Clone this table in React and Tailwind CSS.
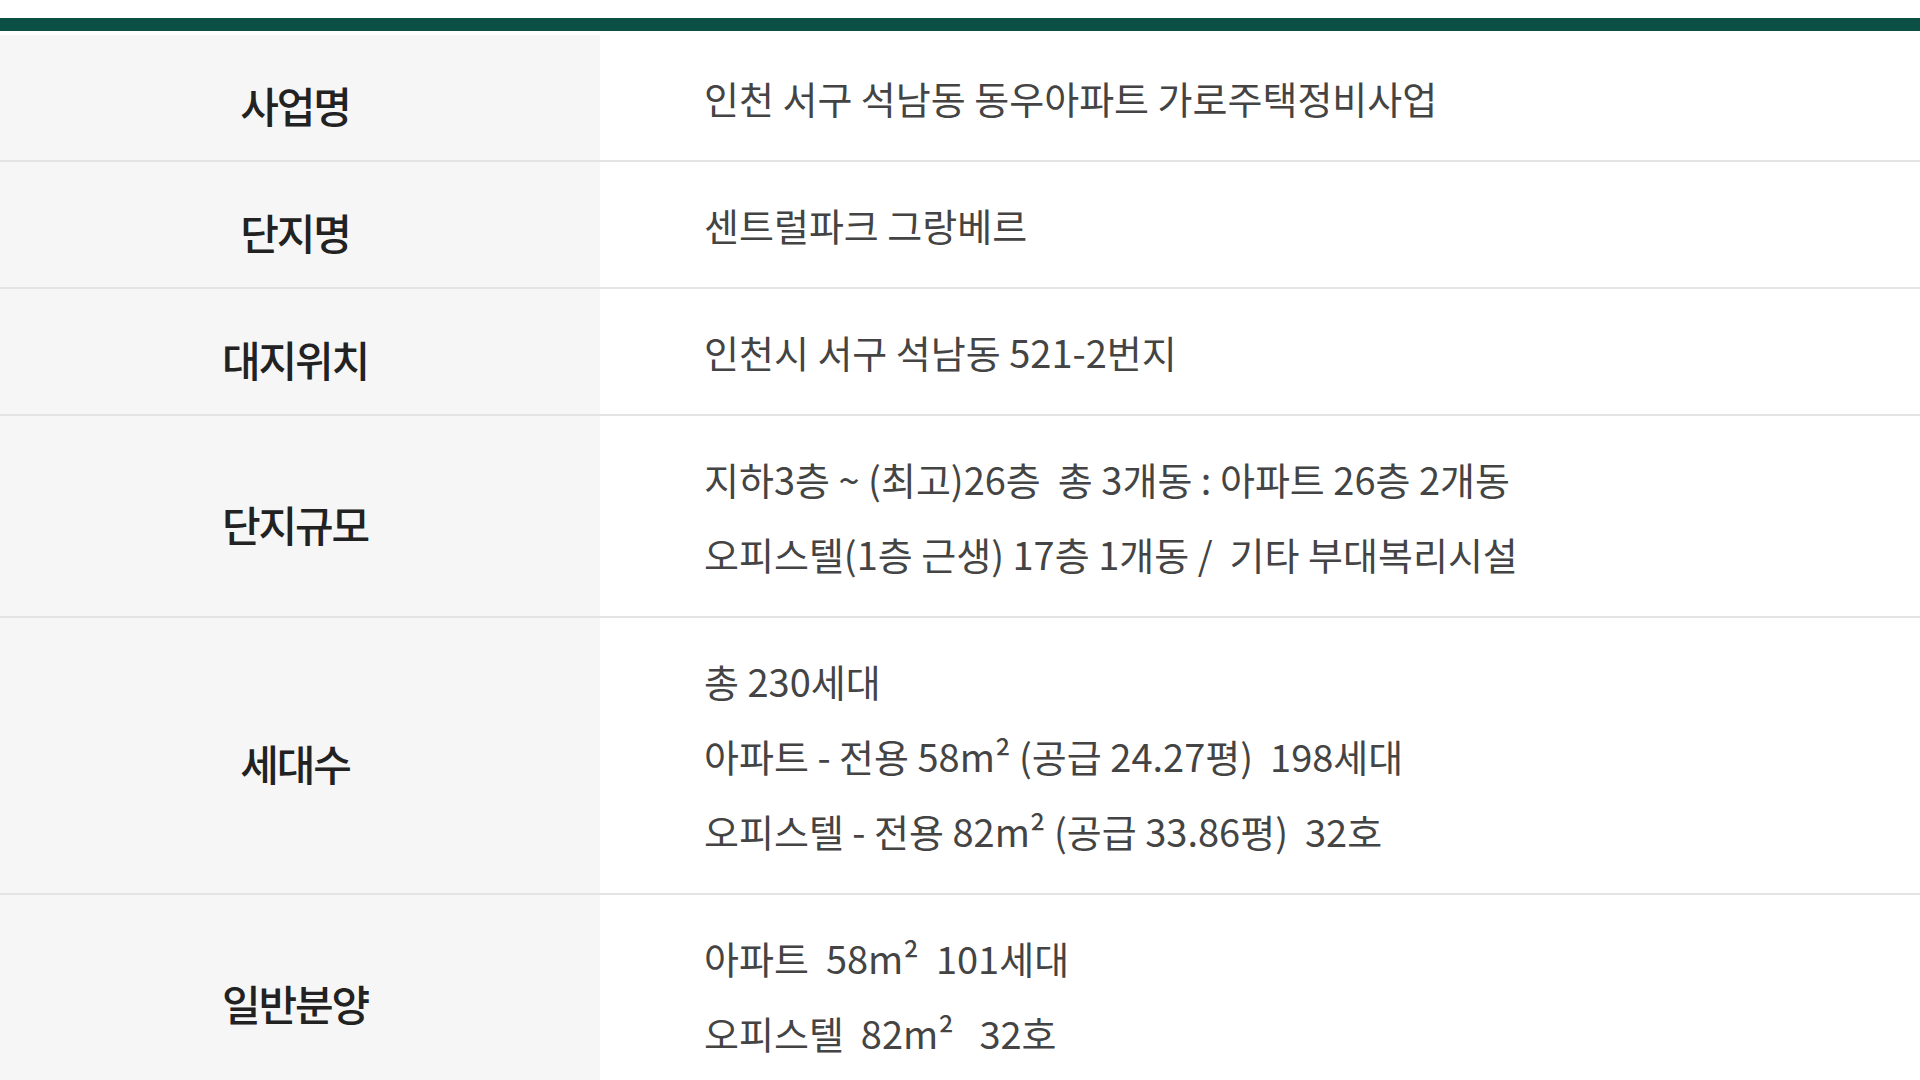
import React from "react";

const rows = [
  { label: "사업명", lines: ["인천 서구 석남동 동우아파트 가로주택정비사업"] },
  { label: "단지명", lines: ["센트럴파크 그랑베르"] },
  { label: "대지위치", lines: ["인천시 서구 석남동 521-2번지"] },
  {
    label: "단지규모",
    lines: [
      "지하3층 ~ (최고)26층  총 3개동 : 아파트 26층 2개동",
      "오피스텔(1층 근생) 17층 1개동 /  기타 부대복리시설",
    ],
  },
  {
    label: "세대수",
    lines: [
      "총 230세대",
      "아파트 - 전용 58m² (공급 24.27평)  198세대",
      "오피스텔 - 전용 82m² (공급 33.86평)  32호",
    ],
  },
  {
    label: "일반분양",
    lines: ["아파트  58m²  101세대", "오피스텔  82m²   32호"],
  },
];

const InfoRow = ({ label, lines }) => {
  return (
    <div className="flex border-b-2 border-[#e4e4e6]">
      <div className="w-[600px] shrink-0 bg-[#f6f6f6] flex items-center justify-center pt-[14px] pr-[10px]">
        <span className="text-[42px] font-medium tracking-[-0.05em] text-[#222222]">
          {label}
        </span>
      </div>
      <div className="flex-1 flex flex-col justify-center pl-[104px] py-[25px] bg-white">
        {lines.map((line, i) => (
          <p
            key={i}
            className="whitespace-pre leading-[75px] text-[38px] tracking-normal text-[#444444]"
          >
            {line}
          </p>
        ))}
      </div>
    </div>
  );
};

const App = () => {
  return (
    <div className="min-h-screen bg-white font-['Noto_Sans_CJK_KR',sans-serif]">
      <div className="pt-[18px]">
        <div className="h-[13px] bg-[#0c4f44] mb-[4px]"></div>
        {rows.map((row) => (
          <InfoRow key={row.label} {...row} />
        ))}
      </div>
    </div>
  );
};

export default App;
